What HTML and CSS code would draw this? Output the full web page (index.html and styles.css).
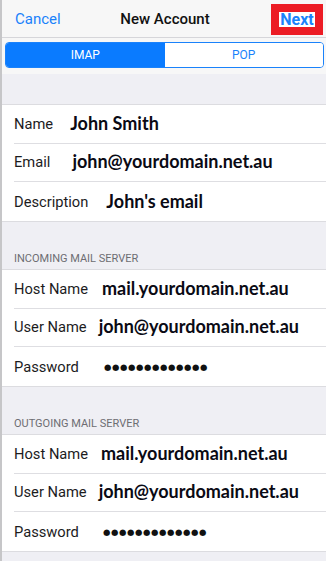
FILE: index.html
```html
<!DOCTYPE html>
<html lang="en">
<head>
    <meta charset="UTF-8">
    <meta name="viewport" content="width=device-width, initial-scale=1.0">
    <title>New Account</title>
    <link rel="stylesheet" href="styles.css">
</head>
<body>
    <div class="screen">
        <div class="nav">
            <span class="nav-btn">Cancel</span>
            <span class="nav-title">New Account</span>
            <span class="next-box"><span class="next-text">Next</span></span>
        </div>

        <div class="seg-bar">
            <div class="segmented">
                <div class="seg active">IMAP</div>
                <div class="seg">POP</div>
            </div>
        </div>

        <div class="gap"></div>

        <div class="group">
            <div class="row">
                <span class="label">Name</span>
                <span class="value" style="margin-left: 17px">John Smith</span>
            </div>
            <div class="row">
                <span class="label">Email</span>
                <span class="value" style="margin-left: 22px">john@yourdomain.net.au</span>
            </div>
            <div class="row">
                <span class="label">Description</span>
                <span class="value" style="margin-left: 18px">John's email</span>
            </div>
        </div>

        <div class="section-title">INCOMING MAIL SERVER</div>
        <div class="group">
            <div class="row">
                <span class="label">Host Name</span>
                <span class="value" style="margin-left: 14px">mail.yourdomain.net.au</span>
            </div>
            <div class="row">
                <span class="label">User Name</span>
                <span class="value" style="margin-left: 12px">john@yourdomain.net.au</span>
            </div>
            <div class="row">
                <span class="label">Password</span>
                <span class="dots" style="margin-left: 25px">&#9679;&#9679;&#9679;&#9679;&#9679;&#9679;&#9679;&#9679;&#9679;&#9679;&#9679;&#9679;&#9679;</span>
            </div>
        </div>

        <div class="section-title">OUTGOING MAIL SERVER</div>
        <div class="group">
            <div class="row">
                <span class="label">Host Name</span>
                <span class="value" style="margin-left: 13px">mail.yourdomain.net.au</span>
            </div>
            <div class="row">
                <span class="label">User Name</span>
                <span class="value" style="margin-left: 12px">john@yourdomain.net.au</span>
            </div>
            <div class="row">
                <span class="label">Password</span>
                <span class="dots" style="margin-left: 24px">&#9679;&#9679;&#9679;&#9679;&#9679;&#9679;&#9679;&#9679;&#9679;&#9679;&#9679;&#9679;&#9679;</span>
            </div>
        </div>
    </div>
</body>
</html>
```

FILE: styles.css
```css
html, body {
    margin: 0;
    padding: 0;
}
body {
    background: #efeff4;
    font-family: Roboto, "Liberation Sans", Arial, sans-serif;
    height: 561px;
    overflow: hidden;
}
.screen {
    border-left: 2px solid #c6c6c8;
    min-height: 561px;
    box-sizing: border-box;
}
.nav {
    height: 38px;
    background: #f7f7f7;
    border-bottom: 1px solid #d6d6da;
    display: grid;
    grid-template-columns: 1fr auto 1fr;
    align-items: center;
    padding: 0 3px 0 13px;
    box-sizing: border-box;
}
.nav-btn {
    color: #1a82fb;
    font-size: 15px;
}
.nav-title {
    color: #111;
    font-size: 15px;
    font-weight: 500;
    margin-left: -8px;
}
.next-box {
    background: #ec1c24;
    width: 52px;
    height: 31px;
    display: flex;
    align-items: center;
    justify-content: center;
    justify-self: end;
    align-self: start;
    margin-top: 4px;
}
.next-text {
    background: #fff;
    color: #1a82fb;
    font-weight: 700;
    font-size: 16px;
    padding: 0 1px;
    line-height: 15px;
}
.seg-bar {
    background: #f7f7f7;
    padding: 4px 2px 6px 3px;
}
.segmented {
    display: flex;
    border: 1px solid #1a82fb;
    border-radius: 4px;
    overflow: hidden;
    height: 26px;
    box-sizing: border-box;
}
.seg {
    flex: 1;
    display: flex;
    align-items: center;
    justify-content: center;
    font-size: 12px;
    color: #1a82fb;
    background: #fff;
}
.seg.active {
    background: #0a7bff;
    color: #fff;
}
.gap {
    height: 30px;
    border-bottom: 1px solid #dcdce0;
}
.group {
    background: #fff;
    border-bottom: 1px solid #dcdce0;
}
.row {
    height: 38.67px;
    display: flex;
    align-items: center;
    margin-left: 12px;
    border-bottom: 1px solid #dedee2;
    box-sizing: border-box;
}
.row:last-child {
    border-bottom: none;
}
.label {
    font-size: 14.7px;
    color: #1c1c1e;
}
.value {
    font-family: Lato, "Open Sans", sans-serif;
    font-weight: 700;
    font-size: 18px;
    color: #0a0a14;
    margin-top: -2px;
}
.dots {
    font-family: "DejaVu Sans", sans-serif;
    font-size: 8.5px;
    letter-spacing: 0.6px;
    color: #111;
}
.section-title {
    height: 47px;
    border-bottom: 1px solid #dcdce0;
    font-size: 11px;
    color: #6d6d72;
    padding-left: 12px;
    display: flex;
    align-items: flex-end;
    line-height: 20px;
}
```
